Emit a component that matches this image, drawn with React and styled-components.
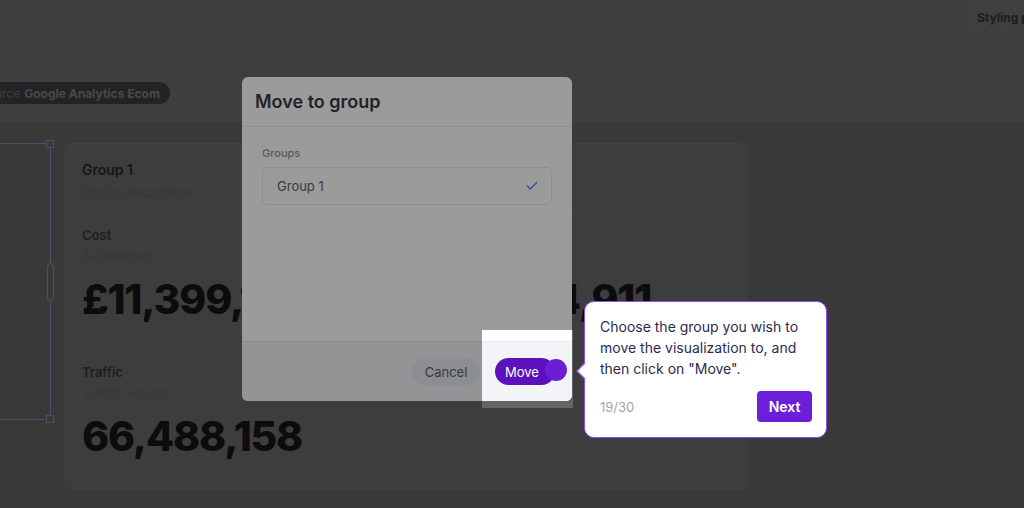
import React from 'react';
import styled, { createGlobalStyle } from 'styled-components';
import { Check } from 'lucide-react';

const GlobalStyle = createGlobalStyle`
    html, body { margin:0; padding:0; }
    body{
        font-family: Inter, "Noto Sans", sans-serif;
        background:#5f5f5f;
    }
`;

const Screen = styled.div`
    position:relative;
    width:1024px;
    height:508px;
    overflow:hidden;
    background:#5f5f5f;
`;

/* page behind the modal (colours already dimmed by the modal backdrop) */

const Header = styled.div`
    height:122px;
    background:#666666;
    display:flex;
    flex-direction:column;
`;

const Toolbar = styled.div`
    height:36px;
    display:flex;
    justify-content:flex-end;
`;

const ToolButton = styled.div`
    margin-right:-54px;
    width:110px;
    height:36px;
    box-sizing:border-box;
    padding:0 8px;
    display:flex;
    align-items:center;
    border:1px solid #6e6e6e;
    border-top:none;
    border-radius:0 0 6px 6px;
    background:#686868;
    color:#303030;
    font-size:12px;
    font-weight:700;
    white-space:nowrap;
`;

const SourcePill = styled.div`
    align-self:flex-start;
    margin:46px 0 0 -30px;
    height:22px;
    padding:0 10px;
    display:flex;
    align-items:center;
    gap:4px;
    border-radius:11px;
    background:#3a3a3d;
    color:#666666;
    font-size:12px;
    white-space:nowrap;
    b{ color:#787878; font-weight:700; }
`;

const Content = styled.div`
    display:flex;
    align-items:flex-start;
    gap:14px;
    padding-top:21px;
`;

const SelectionFrame = styled.div`
    position:relative;
    margin-left:-12px;
    width:63px;
    height:277px;
    box-sizing:border-box;
    border:1px solid #7c86a6;
    border-left:none;
`;

const Handle = styled.span`
    position:absolute;
    right:-4px;
    width:6px;
    height:6px;
    border:1px solid #7c86a6;
    background:#5f5f5f;
    ${p => p.$pos === 'top' ? 'top:-4px;' : 'bottom:-4px;'}
`;

const SideHandle = styled.span`
    position:absolute;
    right:-4px;
    top:119px;
    width:5px;
    height:36px;
    border:1px solid #7c86a6;
    border-radius:4px;
    background:#5f5f5f;
`;

const Card = styled.div`
    width:682px;
    height:347px;
    box-sizing:border-box;
    border:1px solid #6b6b6b;
    border-radius:8px;
    background:#656565;
    overflow:hidden;
`;

const CardHead = styled.div`
    padding:16px 16px 12px;
    border-bottom:1px solid #6c6c6c;
`;

const CardTitle = styled.div`
    font-size:14px;
    line-height:20px;
    font-weight:600;
    color:#272727;
`;

const CardDesc = styled.div`
    margin-top:4px;
    font-size:13px;
    line-height:18px;
    color:#5b5b5b;
`;

const MetricGrid = styled.div`
    display:grid;
    grid-template-columns:355px 1fr;
`;

const Metric = styled.div`
    height:137px;
    padding:10px 16px 0;
    box-sizing:border-box;
`;

const MetricLabel = styled.div`
    font-size:13px;
    line-height:20px;
    font-weight:600;
    color:#343434;
`;

const MetricSource = styled.div`
    font-size:13px;
    line-height:22px;
    color:#5c5c5c;
`;

const MetricValue = styled.div`
    margin-top:6px;
    font-size:41px;
    line-height:52px;
    font-weight:800;
    letter-spacing:-1.2px;
    color:#151515;
    white-space:nowrap;
`;

/* modal */

const Modal = styled.div`
    position:absolute;
    left:242px;
    top:77px;
    z-index:5;
    width:330px;
    height:324px;
    display:flex;
    flex-direction:column;
    border-radius:6px;
    background:#ffffff;
    overflow:hidden;
`;

const ModalHead = styled.div`
    height:50px;
    box-sizing:border-box;
    padding:0 13px;
    display:flex;
    align-items:center;
    border-bottom:1px solid #ececec;
    font-size:18px;
    font-weight:600;
    color:#343843;
`;

const ModalBody = styled.div`
    flex:1;
    padding:18px 20px 0;
`;

const FieldLabel = styled.div`
    font-size:11px;
    line-height:16px;
    font-weight:500;
    color:#959595;
    margin-bottom:6px;
`;

const SelectBox = styled.div`
    height:38px;
    box-sizing:border-box;
    padding:0 12px 0 14px;
    display:flex;
    align-items:center;
    justify-content:space-between;
    border:1px solid #e9e9e9;
    border-radius:5px;
    font-size:13px;
    color:#626262;
`;

const ModalFoot = styled.div`
    height:60px;
    box-sizing:border-box;
    padding:0 17px 0 0;
    display:flex;
    align-items:center;
    justify-content:flex-end;
    gap:15px;
    border-top:1px solid #ebebeb;
    background:#f3f4f7;
`;

const Pill = styled.button`
    width:${p => p.$primary ? '60px' : '68px'};
    height:27px;
    padding:0 ${p => p.$primary ? '6px 0 0' : '0'};
    border:none;
    border-radius:14px;
    font-family:inherit;
    font-size:13px;
    background:${p => p.$primary ? '#5b12bd' : '#e8eaee'};
    color:${p => p.$primary ? '#ffffff' : '#5f6166'};
`;

/* product tour */

const Spotlight = styled.div`
    position:absolute;
    left:482px;
    top:330px;
    z-index:10;
    width:91px;
    height:78px;
    box-shadow:0 0 0 2000px rgba(0,0,0,0.392);
    pointer-events:none;
`;

const Beacon = styled.span`
    position:absolute;
    left:545px;
    top:359px;
    z-index:20;
    width:22px;
    height:22px;
    border-radius:50%;
    background:#6a1ed6;
`;

const Tooltip = styled.div`
    position:absolute;
    left:584px;
    top:301px;
    z-index:20;
    width:243px;
    height:137px;
    box-sizing:border-box;
    padding:14px 14px 15px 15px;
    display:flex;
    flex-direction:column;
    justify-content:space-between;
    border:1px solid #8b4cf0;
    border-radius:10px;
    background:#ffffff;
    &::before{
        content:'';
        position:absolute;
        left:-6px;
        top:63px;
        width:11px;
        height:11px;
        background:#ffffff;
        border-left:1px solid #8b4cf0;
        border-bottom:1px solid #8b4cf0;
        transform:rotate(45deg);
    }
`;

const TipText = styled.p`
    margin:0;
    font-size:14px;
    line-height:21px;
    color:#2c2a50;
    white-space:nowrap;
`;

const TipFoot = styled.div`
    display:flex;
    align-items:center;
    justify-content:space-between;
`;

const Counter = styled.span`
    font-size:13px;
    color:#a3a3b1;
`;

const NextButton = styled.button`
    width:55px;
    height:31px;
    border:none;
    border-radius:4px;
    background:#6d1ed9;
    color:#ffffff;
    font-family:inherit;
    font-size:14px;
    font-weight:600;
`;

export default function App(){
    return(
        <Screen>
            <GlobalStyle/>
            <Header>
                <Toolbar><ToolButton>Styling panel</ToolButton></Toolbar>
                <SourcePill>Source <b>Google Analytics Ecom</b></SourcePill>
            </Header>
            <Content>
                <SelectionFrame>
                    <Handle $pos="top"/>
                    <SideHandle/>
                    <Handle $pos="bottom"/>
                </SelectionFrame>
                <Card>
                    <CardHead>
                        <CardTitle>Group 1</CardTitle>
                        <CardDesc>Group description</CardDesc>
                    </CardHead>
                    <MetricGrid>
                        <Metric>
                            <MetricLabel>Cost</MetricLabel>
                            <MetricSource>Ad Platform</MetricSource>
                            <MetricValue>£11,399,187</MetricValue>
                        </Metric>
                        <Metric>
                            <MetricLabel>Revenue</MetricLabel>
                            <MetricSource>Ecommerce</MetricSource>
                            <MetricValue>£2,904,911</MetricValue>
                        </Metric>
                        <Metric>
                            <MetricLabel>Traffic</MetricLabel>
                            <MetricSource>Traffic Source</MetricSource>
                            <MetricValue>66,488,158</MetricValue>
                        </Metric>
                    </MetricGrid>
                </Card>
            </Content>

            <Modal>
                <ModalHead>Move to group</ModalHead>
                <ModalBody>
                    <FieldLabel>Groups</FieldLabel>
                    <SelectBox>Group 1<Check size={14} color="#5b8cff" strokeWidth={2.5}/></SelectBox>
                </ModalBody>
                <ModalFoot>
                    <Pill>Cancel</Pill>
                    <Pill $primary>Move</Pill>
                </ModalFoot>
            </Modal>

            <Spotlight/>
            <Beacon/>
            <Tooltip>
                <TipText>Choose the group you wish to<br/>move the visualization to, and<br/>then click on "Move".</TipText>
                <TipFoot>
                    <Counter>19/30</Counter>
                    <NextButton>Next</NextButton>
                </TipFoot>
            </Tooltip>
        </Screen>
    )
}
